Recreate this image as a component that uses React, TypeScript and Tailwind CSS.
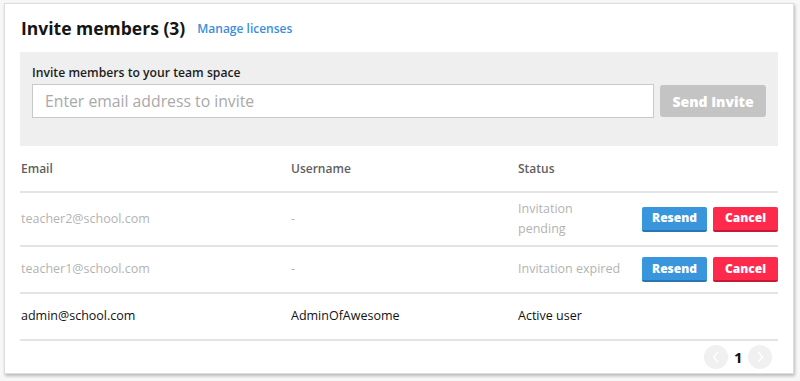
const rows = [
  { email: "teacher2@school.com", user: "-", status: "Invitation pending", pending: true },
  { email: "teacher1@school.com", user: "-", status: "Invitation expired", pending: true },
  { email: "admin@school.com", user: "AdminOfAwesome", status: "Active user", pending: false },
];

const font = { fontFamily: '"Open Sans", "DejaVu Sans", sans-serif' };

export default function App() {
  return (
    <div className="w-[800px] h-[381px] bg-[#f7f7f7] pt-[3px] pl-[4px]" style={font}>
      <div className="w-[790px] h-[371px] bg-white border border-[#dedede] shadow-[1px_2px_3px_rgba(0,0,0,0.25)] px-[15px]">
        {/* title */}
        <div className="flex items-center gap-3 h-[48px] pt-[1px]">
          <h1 className="text-[17.5px] font-bold text-[#151515] pl-[1px]">Invite members (3)</h1>
          <a className="text-[12px] font-semibold text-[#3a8edb] pt-[1px]">Manage licenses</a>
        </div>

        {/* invite box */}
        <div className="bg-[#efefef] h-[94px] px-3 pt-[12px]">
          <div className="text-[12.2px] font-semibold text-[#1d1d1d] h-[20px]">Invite members to your team space</div>
          <div className="flex gap-[6px]">
            <input
              type="text"
              placeholder="Enter email address to invite"
              className="w-[622px] h-[34px] bg-white border border-[#c9c9c9] px-3 text-[15.75px] font-medium outline-none placeholder:text-[#a9a9a9]"
            />
            <button className="w-[106px] h-[32px] mt-[1px] rounded-[3px] bg-[#c4c4c4] text-white text-[14px] font-extrabold">
              Send Invite
            </button>
          </div>
        </div>

        {/* table header */}
        <div className="grid grid-cols-[270px_227px_124px_1fr] h-[47px] items-center border-b-2 border-[#e4e4e4] text-[12px] font-semibold text-[#5f5f5f] pl-[1px]">
          <div>Email</div>
          <div>Username</div>
          <div>Status</div>
          <div />
        </div>

        {rows.map((r, i) => (
          <div
            key={r.email}
            className={`grid grid-cols-[270px_227px_124px_1fr] items-center border-b-2 border-[#e4e4e4] text-[12.5px] font-medium pl-[1px] ${
              i === 0 ? "h-[54px]" : "h-[47px]"
            } ${r.pending ? "text-[#b3b3b3]" : "text-[#111]"}`}
          >
            <div>{r.email}</div>
            <div>{r.user}</div>
            <div className={i === 0 ? "w-[80px] leading-[20px]" : "whitespace-nowrap"}>{r.status}</div>
            <div className="flex justify-end gap-[6px]">
              {r.pending && (
                <>
                  <button className="w-[65px] h-[25px] rounded-[2px] bg-[#3996dd] border-b-2 border-[#2a76b3] text-white text-[12px] font-extrabold">
                    Resend
                  </button>
                  <button className="w-[65px] h-[25px] rounded-[2px] bg-[#fe2a4b] border-b-2 border-[#c51a36] text-white text-[12px] font-extrabold">
                    Cancel
                  </button>
                </>
              )}
            </div>
          </div>
        ))}

        {/* pagination */}
        <div className="flex justify-end items-center gap-[6px] pt-[4px] pr-[6px]">
          <div className="w-[24px] h-[24px] rounded-full bg-[#f0f0f0] flex items-center justify-center">
            <svg width="8" height="12" viewBox="0 0 8 12" fill="none" stroke="#ffffff" strokeWidth="1.5">
              <path d="M6 1 L1.5 6 L6 11" />
            </svg>
          </div>
          <span className="text-[15px] font-bold text-[#111] w-[8px] text-center">1</span>
          <div className="w-[24px] h-[24px] rounded-full bg-[#f0f0f0] flex items-center justify-center">
            <svg width="8" height="12" viewBox="0 0 8 12" fill="none" stroke="#ffffff" strokeWidth="1.5">
              <path d="M2 1 L6.5 6 L2 11" />
            </svg>
          </div>
        </div>
      </div>
    </div>
  );
}
